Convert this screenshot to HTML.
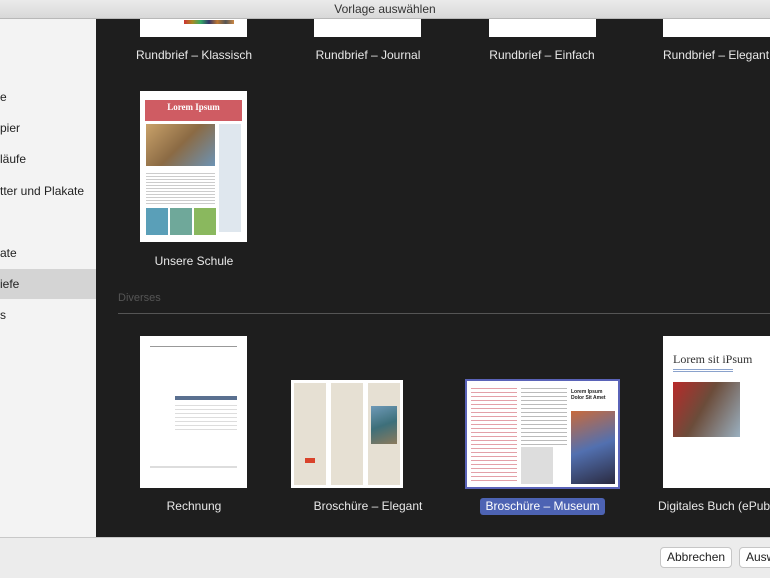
<!DOCTYPE html>
<html><head><meta charset="utf-8"><style>
*{margin:0;padding:0;box-sizing:border-box}
body{width:770px;height:578px;overflow:hidden;position:relative;background:#1e1e1e;font-family:"Liberation Sans",sans-serif}
.abs{position:absolute}
.title{left:0;top:0;width:770px;height:19px;background:linear-gradient(#ebebeb,#d8d8d8);border-bottom:1px solid #b8b8b8;text-align:center;font-size:12px;line-height:19px;color:#333}
.side{left:0;top:19px;width:96px;height:518px;background:#f3f3f3}
.si{position:absolute;left:0;font-size:12px;color:#222}
.sel{left:0;top:269px;width:96px;height:30px;background:#d4d4d4}
.lbl{position:absolute;color:#e8e8e8;font-size:12px;text-align:center;width:180px}
.pg{position:absolute;background:#fff}
.bottom{left:0;top:537px;width:770px;height:41px;background:#ececec;border-top:1px solid #c8c8c8}
.btn{position:absolute;top:547px;height:21px;background:#fff;border:1px solid #c6c6c6;border-radius:4px;font-size:12px;line-height:19px;padding:0 6px;color:#222}
.ln{position:absolute;height:1px;background:#bbb}
</style></head><body>
<div class="abs title">Vorlage auswählen</div>
<div class="abs side"></div>
<div class="abs sel"></div>
<div class="si" style="top:90px">e</div>
<div class="si" style="top:121px">pier</div>
<div class="si" style="top:152px">läufe</div>
<div class="si" style="top:184px">tter und Plakate</div>
<div class="si" style="top:246px">ate</div>
<div class="si" style="top:277px">iefe</div>
<div class="si" style="top:308px">s</div>

<!-- top row -->
<div class="pg" style="left:140px;top:19px;width:107px;height:18px"><div class="abs" style="left:44px;top:1px;width:50px;height:4px;background:linear-gradient(90deg,#c33,#a82,#3a6,#336,#b73,#555,#c84)"></div></div>
<div class="pg" style="left:314px;top:19px;width:107px;height:18px"></div>
<div class="pg" style="left:489px;top:19px;width:107px;height:18px"></div>
<div class="pg" style="left:663px;top:19px;width:107px;height:18px"></div>
<div class="lbl" style="left:104px;top:48px">Rundbrief – Klassisch</div>
<div class="lbl" style="left:278px;top:48px">Rundbrief – Journal</div>
<div class="lbl" style="left:452px;top:48px">Rundbrief – Einfach</div>
<div class="lbl" style="left:626px;top:48px">Rundbrief – Elegant</div>

<!-- Unsere Schule -->
<div class="pg" style="left:140px;top:91px;width:107px;height:151px">
<div class="abs" style="left:5px;top:9px;width:97px;height:21px;background:#cf5c63;color:#fff;font-family:'Liberation Serif',serif;font-weight:bold;font-size:9px;text-align:center;line-height:15px">Lorem Ipsum</div>
<div class="abs" style="left:6px;top:33px;width:69px;height:42px;background:linear-gradient(135deg,#c9a26a,#8b6a44 50%,#6c93b4)"></div>
<div class="abs" style="left:79px;top:33px;width:22px;height:108px;background:#dfe7ee"></div>
<div class="abs" style="left:6px;top:80px;width:69px;height:35px;background:repeating-linear-gradient(#fff 0 2px,#ccc 2px 3px)"></div>
<div class="abs" style="left:6px;top:117px;width:22px;height:27px;background:#5a9fb8"></div>
<div class="abs" style="left:30px;top:117px;width:22px;height:27px;background:#6fa89a"></div>
<div class="abs" style="left:54px;top:117px;width:22px;height:27px;background:#8ab85e"></div>
</div>
<div class="lbl" style="left:104px;top:254px">Unsere Schule</div>

<div class="abs" style="left:118px;top:292px;color:#555;font-size:11px">Diverses</div>
<div class="ln" style="left:118px;top:313px;width:652px;background:#555"></div>

<!-- Row 2 -->
<div class="pg" style="left:140px;top:336px;width:107px;height:152px">
<div class="abs" style="left:10px;top:10px;width:87px;height:1px;background:#999"></div>
<div class="abs" style="left:35px;top:60px;width:62px;height:4px;background:#5a7090"></div>
<div class="abs" style="left:35px;top:66px;width:62px;height:30px;background:repeating-linear-gradient(#fff 0 3px,#ddd 3px 4px)"></div>
<div class="abs" style="left:10px;top:130px;width:87px;height:2px;background:#ddd"></div>
</div>
<div class="pg" style="left:291px;top:380px;width:112px;height:108px">
<div class="abs" style="left:3px;top:3px;width:32px;height:102px;background:#e6e0d3"></div>
<div class="abs" style="left:40px;top:3px;width:32px;height:102px;background:#e6e0d3"></div>
<div class="abs" style="left:77px;top:3px;width:32px;height:102px;background:#e6e0d3"></div>
<div class="abs" style="left:80px;top:26px;width:26px;height:38px;background:linear-gradient(160deg,#6f9ab8,#3d6f7a 50%,#8b7a5c)"></div>
<div class="abs" style="left:14px;top:78px;width:10px;height:5px;background:#d9432b"></div>
</div>
<div class="abs" style="left:465px;top:379px;width:155px;height:110px;border:2px solid #5a63b8;background:#fff">
<div class="abs" style="left:4px;top:4px;width:46px;height:98px;background:repeating-linear-gradient(#fff 0 3px,#e3a0a8 3px 4px)"></div>
<div class="abs" style="left:54px;top:4px;width:46px;height:60px;background:repeating-linear-gradient(#fff 0 3px,#bbb 3px 4px)"></div>
<div class="abs" style="left:54px;top:66px;width:32px;height:37px;background:#ddd"></div>
<div class="abs" style="left:104px;top:8px;font-size:5px;font-weight:bold;color:#222">Lorem Ipsum<br>Dolor Sit Amet</div>
<div class="abs" style="left:104px;top:30px;width:44px;height:73px;background:linear-gradient(160deg,#c86a3c,#5270b0 50%,#2a2a40)"></div>
</div>
<div class="pg" style="left:663px;top:336px;width:107px;height:152px">
<div class="abs" style="left:10px;top:16px;font-family:'Liberation Serif',serif;font-size:12px;color:#333;white-space:nowrap">Lorem sit iPsum</div>
<div class="abs" style="left:10px;top:32px;width:60px;height:5px;background:repeating-linear-gradient(#fff 0 1px,#8aa2cc 1px 2px)"></div>
<div class="abs" style="left:10px;top:46px;width:67px;height:55px;background:linear-gradient(120deg,#b82a2a,#6b4c3a 45%,#9ab0c0)"></div>
</div>

<div class="lbl" style="left:104px;top:499px">Rechnung</div>
<div class="lbl" style="left:278px;top:499px">Broschüre – Elegant</div>
<div class="abs" style="left:480px;top:498px;width:125px;height:17px;background:#4d63b3;border-radius:3px;color:#fff;font-size:12px;text-align:center;line-height:17px">Broschüre – Museum</div>
<div class="lbl" style="left:626px;top:499px;text-align:left;padding-left:32px;width:200px">Digitales Buch (ePub)</div>

<div class="abs bottom"></div>
<div class="btn" style="left:660px">Abbrechen</div>
<div class="btn" style="left:739px;width:40px">Auswählen</div>
</body></html>
